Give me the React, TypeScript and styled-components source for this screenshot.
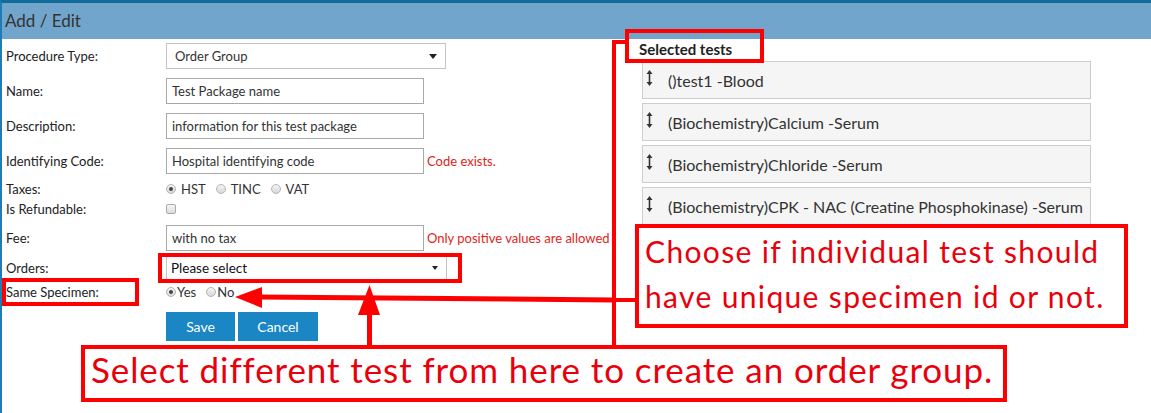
import React from "react";
import styled, { createGlobalStyle } from "styled-components";

const GlobalStyle = createGlobalStyle`
  html, body {
    margin: 0;
    padding: 0;
    background: #fff;
  }
  body {
    font-family: Lato, "Open Sans", sans-serif;
    color: #222;
  }
`;

const Page = styled.div`
  position: relative;
  width: 1151px;
  height: 413px;
  overflow: hidden;
  box-sizing: border-box;
  background: #fff;
  border-top: 3px solid #0f6c98;
  border-left: 2px solid #1f7db5;
`;

const Header = styled.div`
  height: 36px;
  line-height: 35px;
  background: #72a5cc;
  padding-left: 3px;
  font-size: 17px;
  color: #333;
`;

const Body = styled.div`
  display: flex;
`;

const FormColumn = styled.div`
  width: 637px;
  flex: none;
  padding: 4px 0 0 4px;
  box-sizing: border-box;
`;

const Row = styled.div<{ $h: number; $mt?: number }>`
  display: grid;
  grid-template-columns: 160px auto;
  align-items: center;
  height: ${(p) => p.$h}px;
  margin-top: ${(p) => p.$mt ?? 0}px;
`;

const Label = styled.div`
  font-size: 13px;
  color: #222;
  white-space: nowrap;
`;

const Field = styled.div`
  display: flex;
  align-items: center;
  height: 100%;
`;

const TextBox = styled.div<{ $w: number }>`
  box-sizing: border-box;
  width: ${(p) => p.$w}px;
  height: 100%;
  border: 1px solid #a9a9a9;
  padding: 0 5px;
  display: flex;
  align-items: center;
  font-size: 13px;
  color: #333;
  background: #fff;
`;

const SelectBox = styled(TextBox)<{ $pad: number; $dark?: boolean }>`
  justify-content: space-between;
  padding: 0 8px 0 ${(p) => p.$pad}px;
  border-color: #c4c4c4;
  font-size: ${(p) => (p.$dark ? 13.5 : 13)}px;
  color: ${(p) => (p.$dark ? "#111" : "#333")};
`;

const Caret = styled.span<{ $size: number }>`
  width: 0;
  height: 0;
  border-left: ${(p) => p.$size}px solid transparent;
  border-right: ${(p) => p.$size}px solid transparent;
  border-top: ${(p) => p.$size * 1.4}px solid #222;
`;

const ErrorText = styled.span`
  margin-left: 3px;
  font-size: 13px;
  color: #e2231a;
  white-space: nowrap;
`;

const Choice = styled.label<{ $gap: number; $inner: number }>`
  display: inline-flex;
  align-items: center;
  font-size: 13px;
  color: #333;
  margin-right: ${(p) => p.$gap}px;
  gap: ${(p) => p.$inner}px;
`;

const RadioDot = styled.span<{ $on?: boolean }>`
  position: relative;
  width: 10px;
  height: 10px;
  box-sizing: border-box;
  border-radius: 50%;
  border: 1px solid #b5b5b5;
  background: linear-gradient(#f4f4f4, #d8d8d8);

  &::after {
    content: "";
    display: ${(p) => (p.$on ? "block" : "none")};
    position: absolute;
    left: 2px;
    top: 2px;
    width: 4px;
    height: 4px;
    border-radius: 50%;
    background: #444;
  }
`;

const CheckBox = styled.span`
  width: 10px;
  height: 10px;
  box-sizing: border-box;
  border: 1px solid #aaa;
  border-radius: 2px;
  background: linear-gradient(#f6f6f6, #dcdcdc);
`;

const Button = styled.button<{ $w: number }>`
  width: ${(p) => p.$w}px;
  height: 29px;
  margin-right: 3px;
  border: none;
  background: #1a86c4;
  color: #fff;
  font-family: inherit;
  font-size: 14px;
  padding: 0;
`;

const Panel = styled.div`
  flex: 1;
  padding-top: 1px;
`;

const PanelTitle = styled.div`
  height: 18px;
  line-height: 18px;
  font-size: 15px;
  font-weight: 700;
  color: #222;
`;

const TestList = styled.ul`
  list-style: none;
  margin: 3px 0 0 3px;
  padding: 0;
  width: 449px;
  display: flex;
  flex-direction: column;
  gap: 4px;
`;

const TestItem = styled.li`
  box-sizing: border-box;
  height: 38px;
  border: 1px solid #cdcdcd;
  background: #f5f5f5;
  display: flex;
  align-items: flex-start;
  padding: 8px 0 0 3px;
  font-size: 16px;
  color: #333;

  span {
    margin-top: 1px;
    line-height: 20px;
    margin-left: 15px;
    white-space: nowrap;
  }
`;

const Callout = styled.div<{
  $x: number;
  $y: number;
  $w: number;
  $h: number;
  $size: number;
  $lh: number;
  $ls: number;
  $pt: number;
}>`
  position: absolute;
  left: ${(p) => p.$x}px;
  top: ${(p) => p.$y}px;
  width: ${(p) => p.$w}px;
  height: ${(p) => p.$h}px;
  box-sizing: border-box;
  border: 4px solid #f00;
  background: #fff;
  padding: ${(p) => p.$pt}px 0 0 6px;
  font-family: Lato, "Open Sans", sans-serif;
  font-size: ${(p) => p.$size}px;
  line-height: ${(p) => p.$lh}px;
  letter-spacing: ${(p) => p.$ls}px;
  color: #e8000b;
  white-space: nowrap;
`;

const Highlight = styled.div<{ $x: number; $y: number; $w: number; $h: number }>`
  position: absolute;
  left: ${(p) => p.$x}px;
  top: ${(p) => p.$y}px;
  width: ${(p) => p.$w}px;
  height: ${(p) => p.$h}px;
  box-sizing: border-box;
  border: 4px solid #f00;
`;

const Connectors = styled.svg`
  position: absolute;
  left: -2px;
  top: -3px;
  pointer-events: none;
`;

function SortIcon() {
  return (
    <svg width="7" height="16" viewBox="0 0 7 16">
      <path d="M3.5 0 L6.5 4 H4.3 V12 H6.5 L3.5 16 L0.5 12 H2.7 V4 H0.5 Z" fill="#333" />
    </svg>
  );
}

const tests = [
  "()test1 -Blood",
  "(Biochemistry)Calcium -Serum",
  "(Biochemistry)Chloride -Serum",
  "(Biochemistry)CPK - NAC (Creatine Phosphokinase) -Serum",
];

export default function App() {
  return (
    <>
      <GlobalStyle />
      <Page>
        <Header>Add / Edit</Header>
        <Body>
          <FormColumn>
            <Row $h={26}>
              <Label>Procedure Type:</Label>
              <Field>
                <SelectBox $w={280} $pad={8}>
                  Order Group
                  <Caret $size={4} />
                </SelectBox>
              </Field>
            </Row>
            <Row $h={26} $mt={9}>
              <Label>Name:</Label>
              <Field>
                <TextBox $w={258}>Test Package name</TextBox>
              </Field>
            </Row>
            <Row $h={26} $mt={9}>
              <Label>Description:</Label>
              <Field>
                <TextBox $w={258}>information for this test package</TextBox>
              </Field>
            </Row>
            <Row $h={26} $mt={9}>
              <Label>Identifying Code:</Label>
              <Field>
                <TextBox $w={258}>Hospital identifying code</TextBox>
                <ErrorText>Code exists.</ErrorText>
              </Field>
            </Row>
            <Row $h={18} $mt={6}>
              <Label>Taxes:</Label>
              <Field>
                <Choice $gap={10} $inner={5}>
                  <RadioDot $on />
                  HST
                </Choice>
                <Choice $gap={10} $inner={5}>
                  <RadioDot />
                  TINC
                </Choice>
                <Choice $gap={10} $inner={5}>
                  <RadioDot />
                  VAT
                </Choice>
              </Field>
            </Row>
            <Row $h={18} $mt={2}>
              <Label>Is Refundable:</Label>
              <Field>
                <CheckBox />
              </Field>
            </Row>
            <Row $h={26} $mt={7}>
              <Label>Fee:</Label>
              <Field>
                <TextBox $w={258}>with no tax</TextBox>
                <ErrorText>Only positive values are allowed</ErrorText>
              </Field>
            </Row>
            <Row $h={24} $mt={5}>
              <Label>Orders:</Label>
              <Field>
                <SelectBox $w={281} $pad={4} $dark>
                  Please select
                  <Caret $size={3} />
                </SelectBox>
              </Field>
            </Row>
            <Row $h={18} $mt={3}>
              <Label>Same Specimen:</Label>
              <Field>
                <Choice $gap={10} $inner={1}>
                  <RadioDot $on />
                  Yes
                </Choice>
                <Choice $gap={0} $inner={1}>
                  <RadioDot />
                  No
                </Choice>
              </Field>
            </Row>
            <Row $h={29} $mt={11}>
              <span />
              <Field>
                <Button $w={69}>Save</Button>
                <Button $w={80}>Cancel</Button>
              </Field>
            </Row>
          </FormColumn>
          <Panel>
            <PanelTitle>Selected tests</PanelTitle>
            <TestList>
              {tests.map((t) => (
                <TestItem key={t}>
                  <SortIcon />
                  <span>{t}</span>
                </TestItem>
              ))}
            </TestList>
          </Panel>
        </Body>

        <Connectors width="1151" height="413" viewBox="0 0 1151 413">
          <g stroke="#f00" strokeWidth="4" fill="none">
            <path d="M614 40 V346" />
            <path d="M612 42 H627" />
            <path d="M614 300 H637" />
          </g>
          <path d="M614 300 L258 297" stroke="#f00" strokeWidth="5" />
          <polygon points="235,297 262,287 262,308" fill="#f00" />
          <path d="M369.5 346 V310" stroke="#f00" strokeWidth="5" />
          <polygon points="369.5,285 358,315 380,315" fill="#f00" />
        </Connectors>

        <Highlight $x={623} $y={26} $w={139} $h={34} />
        <Highlight $x={156} $y={250} $w={304} $h={30} />
        <Highlight $x={0} $y={275} $w={137} $h={28} />
        <Callout $x={633} $y={221} $w={493} $h={104} $size={30} $lh={45} $ls={1.35} $pt={1}>
          Choose if individual test should
          <br />
          have unique specimen id or not.
        </Callout>
        <Callout $x={79} $y={342} $w={926} $h={57} $size={35} $lh={41} $ls={0.9} $pt={0}>
          Select different test from here to create an order group.
        </Callout>
      </Page>
    </>
  );
}
